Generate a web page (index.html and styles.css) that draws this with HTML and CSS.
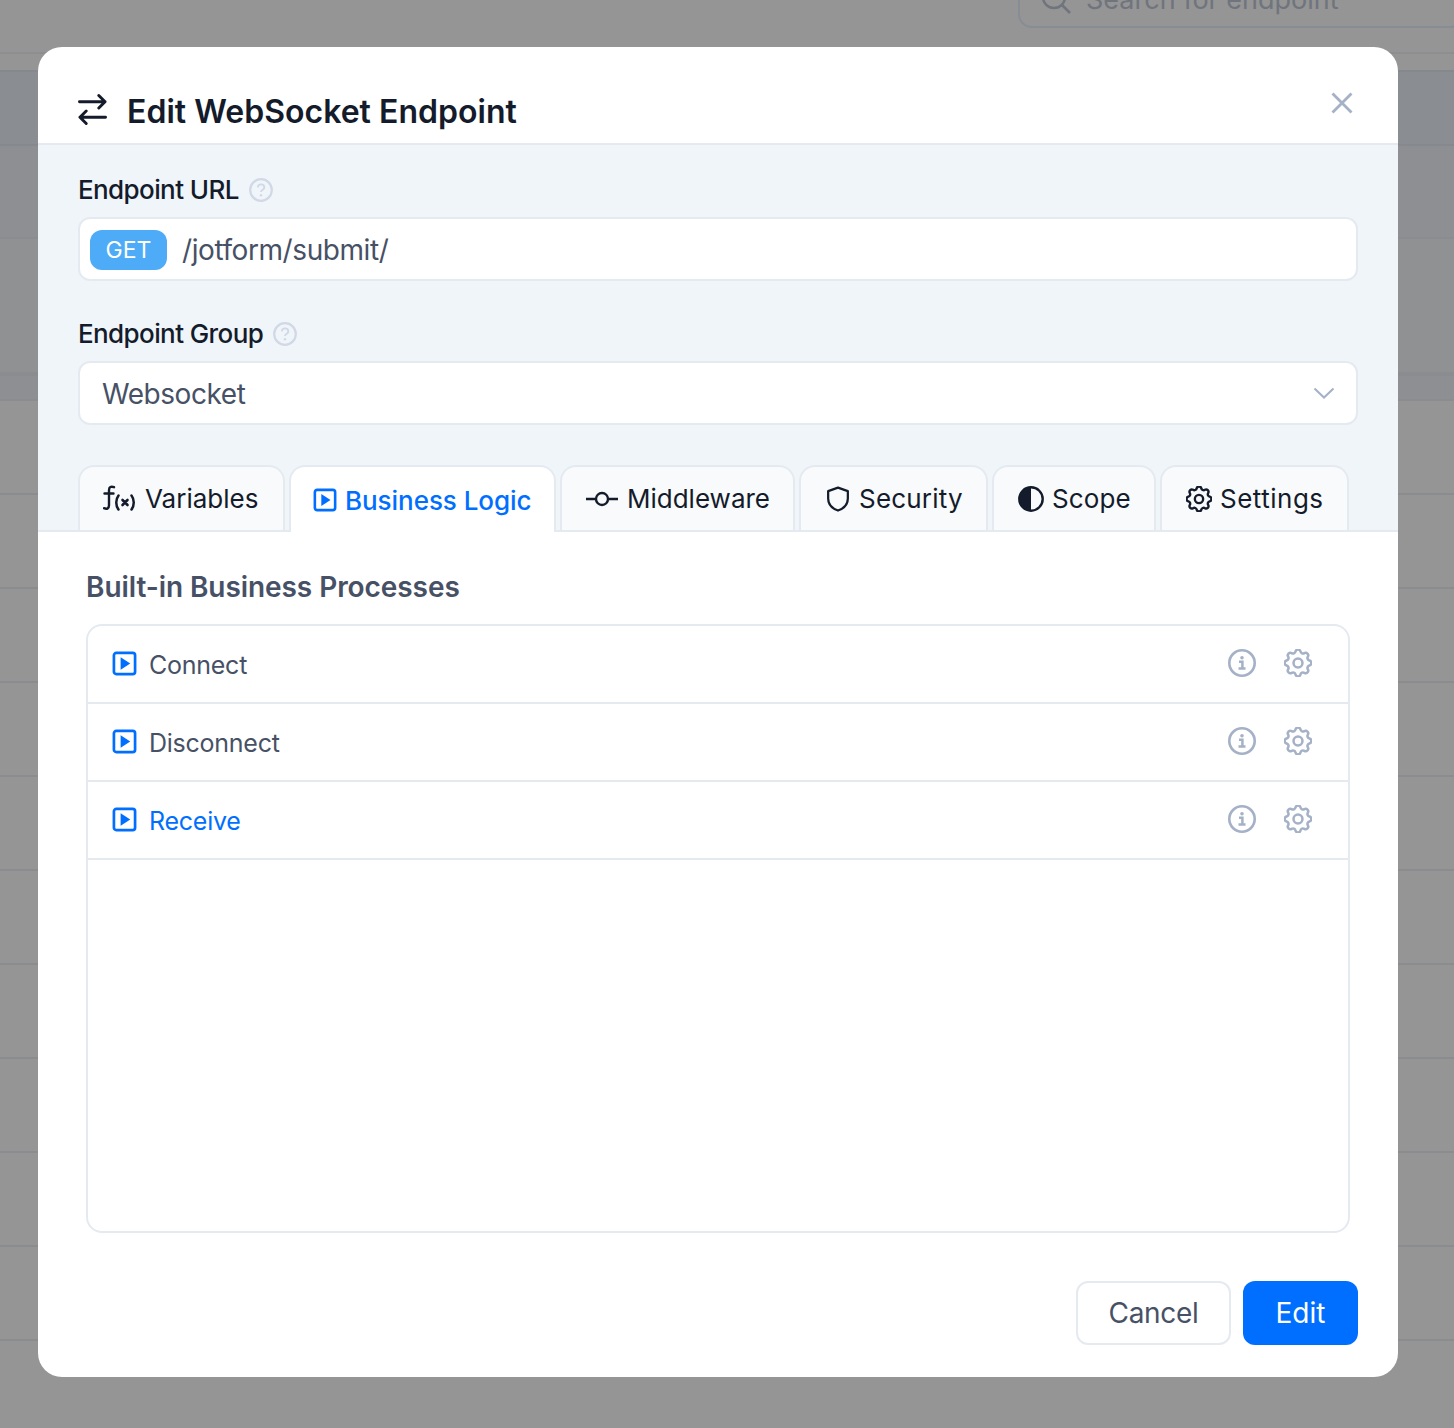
FILE: index.html
```html
<!DOCTYPE html>
<html lang="en">
<head>
<meta charset="utf-8">
<title>Edit WebSocket Endpoint</title>
<link rel="stylesheet" href="styles.css">
</head>
<body>
<svg class="defs" width="0" height="0" aria-hidden="true">
  <symbol id="play" viewBox="0 0 26 26"><rect x="2" y="2" width="22" height="22" rx="2.500" fill="none" stroke="currentColor" stroke-width="2.800"/><path d="M9 6.500v13l10-6.500z" fill="currentColor"/></symbol>
  <symbol id="gear" viewBox="2.600 2.600 18.800 18.800"><g fill="none" stroke="currentColor" stroke-width="1.700" stroke-linecap="round" stroke-linejoin="round"><path d="M10.325 4.317c.426 -1.756 2.924 -1.756 3.350 0a1.724 1.724 0 0 0 2.573 1.066c1.543 -.94 3.310 .826 2.370 2.370a1.724 1.724 0 0 0 1.065 2.572c1.756 .426 1.756 2.924 0 3.350a1.724 1.724 0 0 0 -1.066 2.573c.94 1.543 -.826 3.310 -2.370 2.370a1.724 1.724 0 0 0 -2.572 1.065c-.426 1.756 -2.924 1.756 -3.350 0a1.724 1.724 0 0 0 -2.573 -1.066c-1.543 .94 -3.310 -.826 -2.370 -2.370a1.724 1.724 0 0 0 -1.065 -2.572c-1.756 -.426 -1.756 -2.924 0 -3.350a1.724 1.724 0 0 0 1.066 -2.573c-.94 -1.543 .826 -3.310 2.370 -2.370c1 .608 2.296 .07 2.572 -1.065z"/><circle cx="12" cy="12" r="3"/></g></symbol>
  <symbol id="info" viewBox="0 0 28 28"><circle cx="14" cy="14" r="12.700" fill="none" stroke="currentColor" stroke-width="2.600"/><circle cx="14" cy="8.700" r="1.800" fill="currentColor"/><path d="M11 12.800h3.400v6.400M10.500 19.600h7" fill="none" stroke="currentColor" stroke-width="2.500"/></symbol>
  <symbol id="help" viewBox="0 0 24 24"><circle cx="12" cy="12" r="10.800" fill="none" stroke="currentColor" stroke-width="2.200"/><path d="M8.800 9.400c.3-4 6.500-4 6.500 0 0 2.400-3.300 2.300-3.300 4.700" fill="none" stroke="currentColor" stroke-width="1.900"/><circle cx="12" cy="17.300" r="1.200" fill="currentColor"/></symbol>
</svg>

<div class="backdrop-page">
  <div class="bg-top">
    <div class="bg-search">
      <svg class="bg-search-icon" viewBox="0 0 32 32"><circle cx="14" cy="13" r="11" fill="none" stroke="currentColor" stroke-width="2.500"/><path d="M22 21l8 8" stroke="currentColor" stroke-width="2.500"/></svg>
      <span>Search for endpoint</span>
    </div>
  </div>
  <div class="bg-band"></div>
  <div class="bg-row bg-row-a"></div>
  <div class="bg-row bg-row-b"></div>
  <div class="bg-row bg-row-c"></div>
  <div class="bg-row"></div><div class="bg-row"></div><div class="bg-row"></div><div class="bg-row"></div>
  <div class="bg-row"></div><div class="bg-row"></div><div class="bg-row"></div><div class="bg-row"></div>
  <div class="bg-row"></div><div class="bg-row"></div>
</div>

<section class="modal">
  <header class="modal-head">
    <svg class="title-icon" viewBox="0 0 30 34"><g fill="none" stroke="currentColor" stroke-width="3" stroke-linecap="round" stroke-linejoin="round"><path d="M1.500 8H28M21.500 1.500L28 8l-6.500 6.500"/><path d="M28.500 24H2M8.500 17.500L2 24l6.500 6.500"/></g></svg>
    <h1 class="title">Edit WebSocket Endpoint</h1>
    <svg class="close" viewBox="0 0 22 22"><path d="M1.500 1.500l19 19M20.500 1.500l-19 19" stroke="currentColor" stroke-width="2.800" fill="none"/></svg>
  </header>

  <div class="form-area">
    <div class="label-row"><label class="label">Endpoint URL</label><svg class="help"><use href="#help"/></svg></div>
    <div class="field field-url"><span class="method">GET</span><span class="url">/jotform/submit/</span></div>

    <div class="label-row label-row-second"><label class="label">Endpoint Group</label><svg class="help"><use href="#help"/></svg></div>
    <div class="field field-select"><span class="select-value">Websocket</span>
      <svg class="chevron" viewBox="0 0 22 12"><path d="M1.500 1.500L11 10.500l9.500-9" fill="none" stroke="currentColor" stroke-width="2"/></svg>
    </div>

    <nav class="tabs">
      <a class="tab tab-vars"><svg class="fx-icon" viewBox="0 0 34 28"><g fill="none" stroke="currentColor" stroke-linecap="round"><path d="M11 2.200c-3-1.200-5-.2-5 3v15c0 3.200-2 4.200-5 3M1.500 8.500h9" stroke-width="2.400"/><path d="M15.500 10.500c-3 4-3 10 0 14M28.500 10.500c3 4 3 10 0 14" stroke-width="2.500"/><path d="M19.500 15l5 5M24.500 15l-5 5" stroke-width="2.600"/></g></svg>Variables</a>
      <a class="tab tab-active"><svg class="tab-icon tab-icon-play"><use href="#play"/></svg><span class="tab-text">Business Logic</span></a>
      <a class="tab tab-mid"><svg class="mid-icon" viewBox="0 0 32 16"><circle cx="16" cy="8" r="6" fill="none" stroke="currentColor" stroke-width="2.400"/><path d="M0 8h10M22 8h10" stroke="currentColor" stroke-width="2.400"/></svg>Middleware</a>
      <a class="tab tab-sec"><svg class="tab-icon" viewBox="0 0 26 28"><path d="M13 1.800l10.600 3.700v8c0 6.300-4.400 10.800-10.600 12.900C6.800 24.300 2.400 19.800 2.400 13.500v-8z" fill="none" stroke="currentColor" stroke-width="2.400" stroke-linejoin="round"/></svg>Security</a>
      <a class="tab tab-scope"><svg class="tab-icon" viewBox="0 0 26 26"><circle cx="13" cy="13" r="11.700" fill="none" stroke="currentColor" stroke-width="2.400"/><path d="M13 1a12 12 0 0 0 0 24z" fill="currentColor"/></svg>Scope</a>
      <a class="tab tab-set"><svg class="tab-icon"><use href="#gear"/></svg>Settings</a>
    </nav>
  </div>

  <div class="content">
    <h2 class="section-title">Built-in Business Processes</h2>
    <div class="process-list">
      <div class="process"><svg class="process-icon"><use href="#play"/></svg><span class="process-name">Connect</span><svg class="act act-info"><use href="#info"/></svg><svg class="act act-gear"><use href="#gear"/></svg></div>
      <div class="process"><svg class="process-icon"><use href="#play"/></svg><span class="process-name">Disconnect</span><svg class="act act-info"><use href="#info"/></svg><svg class="act act-gear"><use href="#gear"/></svg></div>
      <div class="process process-active"><svg class="process-icon"><use href="#play"/></svg><span class="process-name">Receive</span><svg class="act act-info"><use href="#info"/></svg><svg class="act act-gear"><use href="#gear"/></svg></div>
    </div>
    <footer class="actions">
      <button class="btn btn-cancel">Cancel</button>
      <button class="btn btn-edit">Edit</button>
    </footer>
  </div>
</section>
</body>
</html>
```
FILE: styles.css
```css
* { box-sizing: border-box; }
html, body { margin: 0; height: 100%; }
body {
  font-family: Inter, "Liberation Sans", sans-serif;
  background: #959595;
  overflow: hidden;
  position: relative;
  height: 1428px;
}
.defs { position: absolute; }

/* dimmed page behind the dialog */
.backdrop-page { height: 1428px; overflow: hidden; }
.bg-top { height: 70px; position: relative; }
.bg-top::after { content: ""; display: block; position: absolute; left: 0; right: 0; top: 52px; height: 2px; background: #8c8e92; }
.bg-search {
  position: absolute; left: 1018px; right: -10px; top: -29px; height: 57px;
  border: 2px solid #888c94; border-radius: 14px;
  display: flex; align-items: center; gap: 14px; padding-left: 20px;
  color: #6f747d; font-size: 27px;
}
.bg-search-icon { width: 32px; height: 32px; flex: none; }
.bg-band { height: 76px; background: #8a8e92; border-top: 2px solid #85888d; border-bottom: 2px solid #85888d; }
.bg-row { height: 94px; border-bottom: 2px solid #8a8c90; }
.bg-row-a { height: 93px; background: #8d8f92; }
.bg-row-b { height: 137px; border-bottom-width: 4px; background: #909192; }
.bg-row-c { height: 25px; background: #8e8f92; }

/* dialog */
.modal {
  position: absolute; left: 38px; top: 47px; width: 1360px; height: 1330px;
  background: #fff; border-radius: 24px; overflow: hidden;
  display: flex; flex-direction: column;
}
.modal-head {
  height: 98px; flex: none; border-bottom: 2px solid #e5eaf1;
  display: flex; align-items: flex-start; padding: 46px 45px 0 40px;
  color: #141b2b;
}
.title-icon { width: 29px; height: 33px; flex: none; margin-top: 1px; }
.title { margin: 0 0 0 20px; font-size: 32px; line-height: 38px; font-weight: 600; flex: 1; letter-spacing: 0.02px; }
.close { width: 22px; height: 22px; flex: none; color: #a5b1c6; margin-top: -1px; }

.form-area { background: #f0f5fa; height: 387px; flex: none; padding: 30px 40px 0; border-bottom: 2px solid #e5eaf1; display: flex; flex-direction: column; }
.label-row { display: flex; align-items: center; height: 30px; gap: 10px; }
.label-row-second { margin-top: 38px; }
.label { font-size: 26px; line-height: 30px; font-weight: 500; color: #141b2b; letter-spacing: -0.6px; }
.help { width: 24px; height: 24px; color: #d1d8e6; margin-top: -1px; }
.field { height: 64px; margin-top: 12px; background: #fff; border: 2px solid #e5eaf1; border-radius: 12px; display: flex; align-items: center; }
.field-url { padding-left: 10px; }
.method { width: 77px; height: 40px; background: #4dabf7; color: #fff; border-radius: 12px; font-size: 23px; display: flex; align-items: center; justify-content: center; padding-top: 1px; margin-top: 1px; }
.url { margin-left: 15px; font-size: 28px; color: #475166; letter-spacing: -0.42px; padding-top: 1px; }
.field-select { padding: 0 21px 0 22px; justify-content: space-between; }
.select-value { font-size: 28px; color: #475166; letter-spacing: -0.45px; padding-top: 1px; }
.chevron { width: 22px; height: 12px; color: #a5b1c6; }

.tabs { display: flex; gap: 4px; margin-top: 40px; height: 67px; margin-bottom: -2px; }
.tab {
  height: 65px; padding: 0 24px; border: 2px solid #e5eaf1; border-bottom: 0;
  border-radius: 16px 16px 0 0; background: #f8fafc;
  display: flex; align-items: center; gap: 8px;
  font-size: 26px; color: #141b2b; letter-spacing: 0.1px;
}
.tab-vars { width: 207px; letter-spacing: 0; gap: 8px; padding-left: 23px; }
.tab-active { width: 267px; height: 67px; background: #fff; color: #006fff; font-weight: 500; padding: 1px 22px 0; letter-spacing: -0.05px; }
.tab-text { white-space: nowrap; }
.tab-mid { width: 235px; gap: 9px; letter-spacing: 0; }
.tab-sec { width: 189px; gap: 8px; letter-spacing: 0.2px; }
.tab-scope { width: 164px; }
.tab-set { width: 189px; letter-spacing: 0.5px; }
.tab-icon { width: 26px; height: 26px; flex: none; }
.tab-icon-play { width: 24px; height: 24px; }
.mid-icon { width: 32px; height: 16px; flex: none; }
.fx-icon { width: 34px; height: 28px; flex: none; }

.content { flex: 1; min-height: 0; padding: 38px 48px 32px; display: flex; flex-direction: column; }
.section-title { margin: 0; font-size: 28px; line-height: 34px; font-weight: 600; color: #475166; letter-spacing: -0.07px; }
.process-list { height: 609px; margin-top: 20px; border: 2px solid #e5eaf1; border-radius: 16px; }
.process { height: 78px; border-bottom: 2px solid #e5eaf1; display: flex; align-items: center; padding: 0 36px 0 24px; color: #475166; }
.process-active { color: #006fff; }
.process-icon { width: 25px; height: 25px; flex: none; color: #006fff; margin-top: -2px; }
.process-name { flex: 1; margin-left: 12px; font-size: 25px; letter-spacing: -0.25px; padding-top: 2px; }
.act { color: #a5b1c6; flex: none; margin-top: -2px; }
.act-info { width: 28px; height: 28px; }
.act-gear { width: 28px; height: 28px; margin-left: 28px; }

.actions { display: flex; justify-content: flex-end; gap: 12px; margin-top: 48px; margin-right: -8px; }
.btn { height: 64px; border-radius: 12px; font: 400 28px Inter, sans-serif; }
.btn-cancel { width: 155px; background: #fff; border: 2px solid #e5eaf1; color: #475166; letter-spacing: -0.3px; }
.btn-edit { width: 115px; background: #006fff; border: 0; color: #fff; }
```
